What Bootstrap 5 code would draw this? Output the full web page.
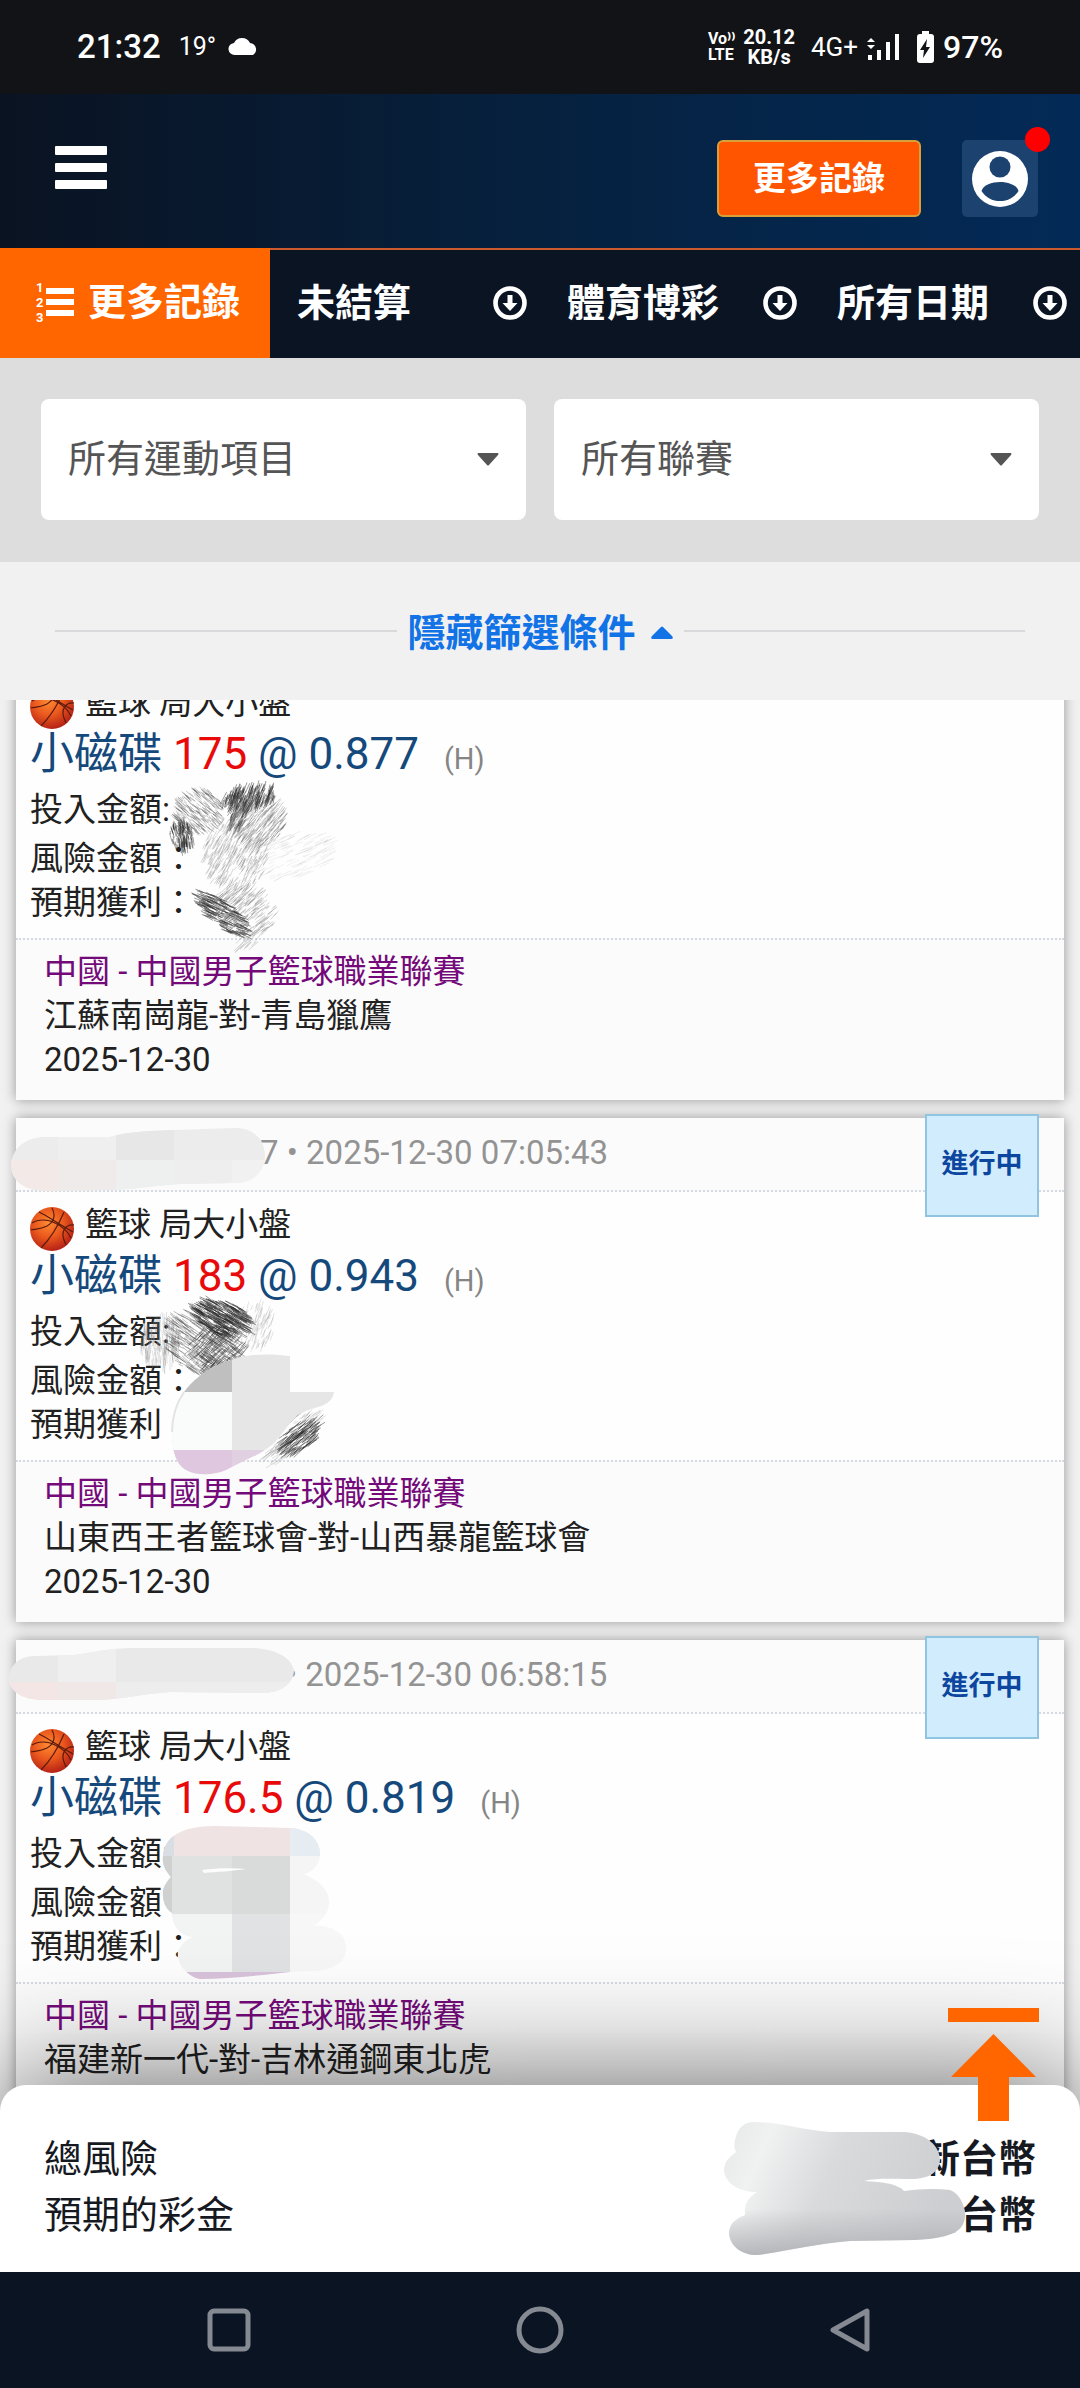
<!DOCTYPE html>
<html lang="zh-Hant">
<head>
<meta charset="utf-8">
<meta name="viewport" content="width=device-width, initial-scale=1">
<title>更多記錄</title>
<link href="https://cdn.jsdelivr.net/npm/bootstrap@5.3.0/dist/css/bootstrap.min.css" rel="stylesheet">
<style>
  body { font-family: Roboto, "Noto Sans CJK TC", sans-serif; font-size: 33px; line-height: 44px; color: #212121; background: #f1f1f1; }
  svg { display: block; flex: none; }

  /* phone status bar */
  .status-bar { height: 94px; padding: 0 77px; background: #121317; color: #fff; }
  .clock { font-size: 33px; font-weight: 500; }
  .temp { font-size: 25px; font-weight: 400; margin: 0 12px 0 18px; }
  .net-mini { font-size: 20px; line-height: 20px; font-weight: 700; text-align: center; }
  .volte { font-size: 16px; line-height: 16px; font-weight: 700; }
  .net-gen { font-size: 26px; }
  .power { font-size: 32px; font-weight: 500; }

  /* site header */
  .site-head { height: 154px; padding: 46px 42px 0 48px; background: linear-gradient(90deg, #0a1322, #06213f 50%, #032a57); }
  .menu-btn { width: 66px; height: 56px; padding: 0 7px; border: 0; }
  .head-actions { gap: 41px; }
  .btn-records { width: 204px; height: 77px; padding: 0; background: #ff5500; border: 2px solid #d9a03a; border-radius: 6px; color: #fff; font-size: 33px; font-weight: 700; }
  .btn-user { width: 76px; height: 77px; padding: 0; background: #1c4370; border: 0; border-radius: 5px; }
  .red-dot { position: absolute; top: -13px; right: -12px; width: 25px; height: 25px; border-radius: 50%; background: #f00; }

  /* tabs */
  .tab-strip { background: #0a1422; border-top: 2px solid #cc5a2e; }
  .tab-cell { height: 108px; padding: 0 13px 3px 27px; color: #fff; font-size: 38px; font-weight: 700; line-height: 56px; }
  .tab-on { margin-top: -2px; height: 110px; padding: 0 0 2px 34px; background: #ff6600; border: 0; border-radius: 0; gap: 14px; }
  .tab-on:hover { background: #ff6600; color: #fff; }
  .tab-select { flex: 1; min-width: 0; padding: 0; appearance: none; background: none; border: 0; color: inherit; font: inherit; }

  /* filters */
  .filter-box { background: #ddd; padding: 41px 41px 42px; gap: 28px; }
  .filter-select { height: 121px; padding: 0 80px 0 27px; border: 0; border-radius: 8px; font-size: 38px; color: #555; background-color: #fff;
    background-image: url("data:image/svg+xml,%3Csvg xmlns='http://www.w3.org/2000/svg' viewBox='0 0 22 13'%3E%3Cpath d='M1 0h20q1 1 0 2L12 12q-1 1-2 0L1 2Q0 1 1 0z' fill='%23555'/%3E%3C/svg%3E");
    background-size: 22px 13px; background-position: right 27px center; }
  .toggle-row { height: 138px; padding: 0 55px; gap: 11px; }
  .toggle-row hr { flex: 1; margin: 0; border-top: 2px solid #d9d9db; opacity: 1; }
  .toggle-link { padding-top: 3px; font-size: 38px; font-weight: 700; color: #1273e6; gap: 15px; }

  /* bets */
  .bet-list { padding: 0 16px; overflow: hidden; background: #f1f1f1; }
  .bet { position: relative; margin-bottom: 18px; background: #fefefe; box-shadow: 0 0 12px rgba(0, 0, 0, .38); }
  .bet-scrolled { margin-top: -30px; }
  .bet-head { padding: 13px 14px 15px; background: #fbfbfb; color: #939393; border-bottom: 2px dotted #d5dae2; }
  .bet-id { display: inline-block; width: 230px; }
  .bet-id-long { width: 256px; }
  .bet-main { padding: 11px 14px 13px; }
  .sport { gap: 11px; }
  .sport svg { margin: 4px 0 -4px; }
  .pick { font-size: 44px; line-height: 58px; color: #15497c; }
  .pick b { font-weight: 400; color: #e80a0a; }
  .pick i { font-style: normal; font-size: 29px; line-height: 29px; color: #858585; margin-left: 14px; }
  .stake { line-height: 54px; }
  .bet-event { padding: 10px 28px 18px; background: #fbfbfb; border-top: 2px dotted #d5dae2; }
  .league { color: #740a7a; }
  .state-tag { position: absolute; top: -4px; right: 25px; width: 114px; height: 103px; line-height: 97px; text-align: center; font-size: 27px; font-weight: 700; color: #0c469f; background: #d0ecfd; border: 2px solid #8fc5e0; }
  .cover { position: absolute; top: 0; left: 0; overflow: visible; pointer-events: none; }

  /* totals */
  .totals { position: relative; z-index: 2; margin-top: -33px; padding: 46px 44px 29px; background: #fff; border-radius: 26px 26px 0 0; box-shadow: 0 0 124px rgba(0, 0, 0, .62); font-size: 38px; line-height: 56px; color: #16191f; }
  .to-top { position: absolute; top: -77px; right: 41px; }
  .cover-total { position: absolute; top: 37px; right: 115px; }
  .sys-nav { position: relative; z-index: 3; height: 116px; padding: 0 19%; background: #0a1422; }
  .sys-nav button { padding: 0; border: 0; background: none; }
</style>
</head>
<body>

<svg width="0" height="0" class="position-absolute" aria-hidden="true">
  <defs>
    <radialGradient id="ballFill" cx=".42" cy=".36" r=".68">
      <stop offset="0" stop-color="#ff8a33"/><stop offset=".5" stop-color="#e9571d"/><stop offset="1" stop-color="#b01c15"/>
    </radialGradient>
    <symbol id="ball" viewBox="0 0 44 44">
      <circle cx="22" cy="22" r="22" fill="url(#ballFill)"/>
      <path d="M9 5C16 8 30 18 43 25M22 1C26 8 24 15 17 19 11 22 6 22 1 23M34 5C29 17 21 31 11 41M44 18C35 17 31 25 34 33L36 38M2 16C8 12 18 12 25 16 34 20 38 25 41 31" fill="none" stroke="#5b1b0c" stroke-width="1.2"/>
    </symbol>
    <symbol id="down" viewBox="0 0 34 34">
      <circle cx="17" cy="17" r="14.5" fill="none" stroke="#fff" stroke-width="4.6"/>
      <path d="M14.500 9h5v8h5L17 25 9.500 17h5z" fill="#fff"/>
    </symbol>
    <clipPath id="c2head"><path d="M11 1164C13 1146 28 1137 45 1137L110 1137C130 1131 150 1131 175 1130L235 1128C254 1128 265 1140 265 1156C264 1174 250 1184 232 1183L180 1184C150 1186 130 1190 110 1190L45 1191C25 1190 11 1182 11 1164Z"/></clipPath>
    <clipPath id="c2body"><path d="M172 1432C172 1405 185 1383 212 1368C240 1353 265 1353 290 1356V1392H334C332 1405 320 1406 306 1411C290 1418 284 1434 272 1445C258 1456 240 1462 226 1470C212 1476 185 1478 177 1460C173 1452 172 1442 172 1432Z"/></clipPath>
    <clipPath id="c3head"><path d="M8 1680C10 1664 20 1656 35 1656L75 1655C95 1652 105 1649 130 1648L255 1648C278 1650 291 1658 294 1670C294 1684 280 1693 262 1693L170 1692C140 1694 120 1700 95 1700L45 1700C25 1700 12 1694 8 1680Z"/></clipPath>
    <clipPath id="c3body"><path d="M163 1856C164 1838 180 1826 215 1826L290 1828C310 1829 321 1842 320 1856C319 1866 312 1872 304 1874C322 1882 330 1892 329 1904C328 1916 318 1924 313 1926C332 1924 346 1934 346 1948C346 1964 330 1971 312 1971L290 1972C262 1975 230 1979 200 1979C186 1976 176 1962 178 1952C180 1944 188 1939 193 1937C180 1936 172 1926 172 1913C165 1908 162 1900 163 1890C165 1884 168 1880 171 1877C165 1870 162 1864 163 1856Z"/></clipPath>
    <linearGradient id="smear" x1="0" y1="0" x2="1" y2=".25">
      <stop offset="0" stop-color="#e6e7e7"/><stop offset=".2" stop-color="#f0f1f1"/><stop offset=".5" stop-color="#d9dadb"/><stop offset="1" stop-color="#cdced1"/>
    </linearGradient>
    <linearGradient id="smearDown" x1="0" y1="0" x2="0" y2="1">
      <stop offset=".3" stop-color="#a9abb0" stop-opacity="0"/><stop offset="1" stop-color="#a9abb0" stop-opacity=".8"/>
    </linearGradient>
  </defs>
</svg>

<div class="d-flex flex-column min-vh-100">

  <div class="status-bar d-flex align-items-center justify-content-between">
    <div class="d-flex align-items-center">
      <span class="clock">21:32</span>
      <span class="temp">19°</span>
      <svg width="31" height="18" viewBox="0 0 31 18"><path d="M7 17a6 6 0 0 1-1-12A9 9 0 0 1 22 5a6.500 6.500 0 0 1 3 12z" fill="#fff"/></svg>
    </div>
    <div class="d-flex align-items-center">
      <span class="volte me-2">Vo⁾⁾<br>LTE</span>
      <span class="net-mini me-3">20.12<br>KB/s</span>
      <span class="net-gen me-2">4G+</span>
      <svg class="me-3" width="34" height="28" viewBox="0 0 34 28" fill="#fff"><path d="M1 9l4-4 4 4zM1 12l4 4 4-4zM2 22h4v5H2zM11 17h4v10h-4zM20 9h4v18h-4zM29 1h4v26h-4z"/></svg>
      <svg class="me-2" width="19" height="32" viewBox="0 0 19 32"><path d="M6 0h7v3h2q3 0 3 3v23q0 3-3 3H4q-3 0-3-3V6q0-3 3-3h2z" fill="#fff"/><path d="M11 8L4 19h4l-1 8 7-11h-4z" fill="#121317"/></svg>
      <span class="power">97%</span>
    </div>
  </div>

  <header class="site-head d-flex align-items-start justify-content-between">
    <button class="menu-btn btn d-flex align-items-center" type="button" aria-label="選單">
      <svg width="52" height="44" viewBox="0 0 52 44" fill="#fff"><rect width="52" height="9" rx="1"/><rect y="17" width="52" height="9" rx="1"/><rect y="34" width="52" height="9" rx="1"/></svg>
    </button>
    <div class="head-actions d-flex align-items-start">
      <button class="btn btn-records" type="button">更多記錄</button>
      <button class="btn btn-user position-relative d-flex align-items-center justify-content-center" type="button" aria-label="帳戶">
        <svg width="56" height="56" viewBox="0 0 56 56"><circle cx="28" cy="28" r="28" fill="#fff"/><circle cx="28" cy="16" r="10.500" fill="#1c4370"/><path d="M9.500 40C11 34 20 31 28 31s17 3 18.500 9a22 22 0 0 1-37 0z" fill="#1c4370"/></svg>
        <span class="red-dot"></span>
      </button>
    </div>
  </header>

  <nav class="tab-strip row g-0 row-cols-4">
    <div class="col">
      <button class="btn tab-cell tab-on w-100 d-flex align-items-center" type="button">
        <svg width="40" height="46" viewBox="0 -3 40 46" fill="#fff"><rect x="12" y="6" width="28" height="6"/><rect x="12" y="17" width="28" height="6"/><rect x="12" y="28" width="28" height="6"/><g font-family="Roboto" font-size="13" font-weight="700"><text x="2" y="10">1</text><text x="2" y="25">2</text><text x="2" y="40">3</text></g></svg>
        更多記錄
      </button>
    </div>
    <div class="col tab-cell d-flex align-items-center"><select class="tab-select" aria-label="結算狀態"><option>未結算</option></select><svg width="34" height="34"><use href="#down"/></svg></div>
    <div class="col tab-cell d-flex align-items-center"><select class="tab-select" aria-label="博彩類型"><option>體育博彩</option></select><svg width="34" height="34"><use href="#down"/></svg></div>
    <div class="col tab-cell d-flex align-items-center"><select class="tab-select" aria-label="日期"><option>所有日期</option></select><svg width="34" height="34"><use href="#down"/></svg></div>
  </nav>

  <div class="filter-box d-flex">
    <select class="form-select filter-select" aria-label="運動項目"><option>所有運動項目</option></select>
    <select class="form-select filter-select" aria-label="聯賽"><option>所有聯賽</option></select>
  </div>

  <div class="toggle-row d-flex align-items-center">
    <hr>
    <a class="toggle-link d-flex align-items-center text-decoration-none" href="#bets">隱藏篩選條件
      <svg width="22" height="13" viewBox="0 0 22 13"><path d="M10 1q1-1 2 0l9 9q2 3-1 3H2q-3 0-1-3z" fill="#1273e6"/></svg></a>
    <hr>
  </div>

  <main class="bet-list flex-grow-1" id="bets">
    <article class="bet bet-scrolled">
      <div class="bet-main">
        <div class="sport d-flex"><svg width="44" height="44"><use href="#ball"/></svg><span>籃球 局大小盤</span></div>
        <div class="pick">小磁碟 <b>175</b> @ 0.877 <i>(H)</i></div>
        <div class="stake">投入金額:</div>
        <div>風險金額：</div>
        <div>預期獲利：</div>
      </div>
      <div class="bet-event">
        <div class="league">中國 - 中國男子籃球職業聯賽</div>
        <div>江蘇南崗龍-對-青島獵鷹</div>
        <div>2025-12-30</div>
      </div>
      <svg class="cover" width="360" height="430" viewBox="16 670 360 430"><g data-hatch="first"></g></svg>
    </article>

    <article class="bet">
      <div class="bet-head d-flex"><span class="bet-id"></span><span>7 • 2025-12-30 07:05:43</span></div>
      <div class="bet-main">
        <div class="sport d-flex"><svg width="44" height="44"><use href="#ball"/></svg><span>籃球 局大小盤</span></div>
        <div class="pick">小磁碟 <b>183</b> @ 0.943 <i>(H)</i></div>
        <div class="stake">投入金額:</div>
        <div>風險金額：</div>
        <div>預期獲利：</div>
      </div>
      <div class="bet-event">
        <div class="league">中國 - 中國男子籃球職業聯賽</div>
        <div>山東西王者籃球會-對-山西暴龍籃球會</div>
        <div>2025-12-30</div>
      </div>
      <span class="state-tag">進行中</span>
      <svg class="cover" width="360" height="504" viewBox="16 1118 360 504">
        <g clip-path="url(#c2head)">
          <path fill="#ececec" d="M0 1120h300v80H0z"/><path fill="#efefef" d="M58 1120h58v40H58z"/><path fill="#e7e7e7" d="M116 1120h58v40h-58z"/>
          <path fill="#f3e9e7" d="M0 1160h58v40H0z"/><path fill="#f0ebeb" d="M58 1160h58v40H58z"/><path fill="#eef0f0" d="M116 1160h58v40h-58z"/><path fill="#eee" d="M174 1160h58v40h-58z"/><path fill="#f1f1f1" d="M232 1160h58v40h-58z"/>
        </g>
        <g data-hatch="second"></g>
        <g clip-path="url(#c2body)">
          <path fill="#e6e6e6" d="M160 1340h190v150H160z"/><path fill="#bfbfbf" d="M160 1340h72v52h-72z"/><path fill="#fafcfb" d="M160 1392h72v58h-72z"/><path fill="#dfc7e0" d="M160 1450h72v40h-72z"/><path fill="#e1cfe2" d="M232 1450h60v40h-60z"/>
        </g>
        <path d="M172 1432C172 1417 176 1404 184 1392" fill="none" stroke="#e3e4e4" stroke-width="2"/>
        <g data-hatch="secondTail"></g>
      </svg>
    </article>

    <article class="bet">
      <div class="bet-head d-flex"><span class="bet-id bet-id-long"></span><span>• 2025-12-30 06:58:15</span></div>
      <div class="bet-main">
        <div class="sport d-flex"><svg width="44" height="44"><use href="#ball"/></svg><span>籃球 局大小盤</span></div>
        <div class="pick">小磁碟 <b>176.5</b> @ 0.819 <i>(H)</i></div>
        <div class="stake">投入金額:</div>
        <div>風險金額：</div>
        <div>預期獲利：</div>
      </div>
      <div class="bet-event">
        <div class="league">中國 - 中國男子籃球職業聯賽</div>
        <div>福建新一代-對-吉林通鋼東北虎</div>
      </div>
      <span class="state-tag">進行中</span>
      <svg class="cover" width="360" height="460" viewBox="16 1640 360 460">
        <g clip-path="url(#c3head)">
          <path fill="#e9e9e9" d="M0 1640h300v64H0z"/><path fill="#efefef" d="M58 1640h58v42H58z"/>
          <path fill="#f3e6e5" d="M0 1682h58v30H0z"/><path fill="#f0e8e7" d="M58 1682h58v30H58z"/><path fill="#ededed" d="M116 1682h190v30H116z"/>
        </g>
        <g clip-path="url(#c3body)">
          <path fill="#efe3e3" d="M150 1820h200v36H150z"/><path fill="#d8dee3" d="M150 1820h24v36h-24z"/><path fill="#e6edf2" d="M290 1820h60v36h-60z"/>
          <path fill="#e0e2e1" d="M150 1856h82v58h-82z"/><path fill="#cfd1d0" d="M150 1856h22v58h-22z"/><path fill="#d9dbda" d="M232 1856h58v58h-58z"/><path fill="#f5f5f5" d="M290 1856h60v58h-60z"/>
          <path fill="#f2f3f3" d="M150 1914h82v58h-82z"/><path fill="#e1e2e3" d="M232 1914h58v58h-58z"/><path fill="#f7f7f7" d="M290 1914h60v58h-60z"/>
          <path fill="#d9c3dc" d="M150 1972h200v20H150z"/>
        </g>
        <path d="M202 1870C216 1868 232 1868 246 1869C232 1871 216 1872 204 1873Z" fill="#fdfdfd"/>
      </svg>
    </article>
  </main>

  <section class="totals">
    <div class="d-flex justify-content-between"><span>總風險</span><strong>新台幣</strong></div>
    <div class="d-flex justify-content-between"><span>預期的彩金</span><strong>新台幣</strong></div>
    <svg class="cover-total" width="241" height="134" viewBox="724 2122 241 134">
      <path d="M735 2140C738 2126 745 2122 755 2122C785 2123 800 2130 830 2132L905 2132C928 2134 940 2147 940 2160C939 2172 930 2179 910 2179C890 2179 876 2178 864 2181C884 2182 898 2184 904 2191C918 2189 934 2188 950 2190C960 2194 965 2206 965 2214C965 2230 955 2238 915 2240L850 2241C815 2244 790 2250 765 2254C748 2258 731 2250 729 2234C729 2222 738 2218 745 2215C744 2204 748 2198 757 2192C740 2192 725 2184 724 2170C725 2160 730 2157 736 2152C734 2148 734 2144 735 2140Z" fill="url(#smear)"/>
      <path d="M745 2215C744 2204 748 2198 757 2192L904 2191C918 2189 934 2188 950 2190C960 2194 965 2206 965 2214C965 2230 955 2238 915 2240L850 2241C815 2244 790 2250 765 2254C748 2258 731 2250 729 2234C729 2222 738 2218 745 2215Z" fill="url(#smearDown)"/>
    </svg>
    <a class="to-top" href="#bets" aria-label="回到頂端"><svg width="91" height="113" viewBox="0 0 91 113" fill="#ff6600"><path d="M0 0h91v14H0zM45.500 26L88 69H61v44H30V69H3z"/></svg></a>
  </section>

  <footer class="sys-nav d-flex align-items-center justify-content-between">
    <button type="button" aria-label="最近"><svg width="48" height="48" viewBox="0 0 48 48" fill="none" stroke="#858a92" stroke-width="5"><rect x="5" y="5" width="38" height="38" rx="4"/></svg></button>
    <button type="button" aria-label="主畫面"><svg width="48" height="48" viewBox="0 0 48 48" fill="none" stroke="#858a92" stroke-width="5"><circle cx="24" cy="24" r="21"/></svg></button>
    <button type="button" aria-label="返回"><svg width="48" height="48" viewBox="0 0 48 48" fill="none" stroke="#858a92" stroke-width="5" stroke-linejoin="round"><path d="M40 5v38L6 24z"/></svg></button>
  </footer>
</div>

<script src="https://cdn.jsdelivr.net/npm/bootstrap@5.3.0/dist/js/bootstrap.bundle.min.js"></script>
<script>
  // Pencil shading: [cx, cy, rx, ry, tilt, stroke angle, stroke length, count, colour, opacity]
  const shading = {
    first: [
      [198, 812, 25, 22, -30, 40, 14, 300, '#444', .4],
      [182, 836, 12, 14, -20, 80, 16, 110, '#222', .6],
      [250, 797, 28, 11, -8, -70, 18, 170, '#222', .65],
      [238, 812, 9, 20, 10, -65, 16, 100, '#333', .6],
      [258, 820, 27, 26, 0, -50, 18, 260, '#555', .4],
      [235, 855, 32, 38, 0, -60, 16, 340, '#777', .4],
      [295, 855, 42, 22, -15, -25, 22, 110, '#999', .2],
      [222, 914, 34, 12, 38, 25, 20, 190, '#222', .65],
      [245, 910, 32, 24, 20, -40, 18, 230, '#666', .4],
      [248, 940, 14, 8, -40, -45, 22, 18, '#777', .4]
    ],
    second: [
      [160, 1342, 20, 25, 0, 88, 22, 170, '#888', .35],
      [205, 1342, 40, 32, 15, 35, 22, 380, '#444', .5],
      [222, 1318, 30, 17, 15, 30, 24, 260, '#222', .7],
      [218, 1350, 28, 26, 40, -45, 22, 230, '#333', .5],
      [256, 1325, 20, 22, 0, -70, 16, 90, '#888', .35]
    ],
    secondTail: [
      [300, 1437, 24, 13, -38, -38, 24, 150, '#222', .65],
      [280, 1452, 20, 9, -38, -38, 22, 50, '#888', .4],
      [308, 1420, 16, 8, -10, -40, 14, 40, '#888', .4]
    ]
  };
  let seed = 7;
  const rnd = () => (seed = (seed * 16807) % 2147483647) / 2147483647;
  document.querySelectorAll('[data-hatch]').forEach(g => {
    shading[g.dataset.hatch].forEach(([cx, cy, rx, ry, tilt, ang, len, n, col, op]) => {
      const t = tilt * Math.PI / 180;
      let d = '';
      for (let i = 0; i < n; i++) {
        const r = Math.sqrt(rnd()), a = rnd() * 2 * Math.PI;
        const u = rx * r * Math.cos(a), v = ry * r * Math.sin(a);
        const x = cx + u * Math.cos(t) - v * Math.sin(t), y = cy + u * Math.sin(t) + v * Math.cos(t);
        const s = (ang + rnd() * 16 - 8) * Math.PI / 180, h = len * (.2 + rnd() * .6) / 2;
        d += `M${x - h * Math.cos(s)} ${y - h * Math.sin(s)}L${x + h * Math.cos(s)} ${y + h * Math.sin(s)}`;
      }
      const p = document.createElementNS('http://www.w3.org/2000/svg', 'path');
      p.setAttribute('d', d);
      p.setAttribute('stroke', col);
      p.setAttribute('stroke-opacity', op);
      p.setAttribute('stroke-width', '.7');
      g.appendChild(p);
    });
  });
</script>
</body>
</html>
